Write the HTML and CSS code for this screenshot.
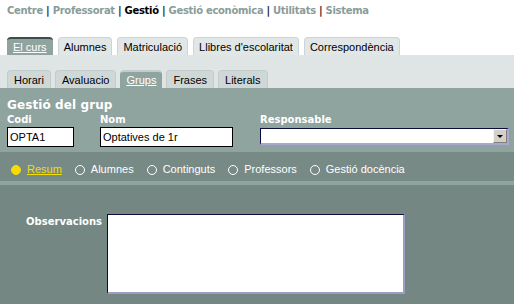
FILE: index.html
```html
<!DOCTYPE html>
<html lang="ca">
<head>
    <meta charset="UTF-8">
    <title>Gestió del grup</title>
    <link rel="stylesheet" href="styles.css">
</head>
<body>
    <div class="topnav">
        <a href="#">Centre</a> | <a href="#">Professorat</a> | <a href="#" class="current">Gestió</a> | <a href="#">Gestió econòmica</a> | <a href="#">Utilitats</a> | <a href="#">Sistema</a>
    </div>

    <!-- main tabs -->
    <div class="tabs main-tabs">
        <a href="#" class="tab active"><span>El curs</span></a>
        <a href="#" class="tab">Alumnes</a>
        <a href="#" class="tab">Matriculació</a>
        <a href="#" class="tab">Llibres d'escolaritat</a>
        <a href="#" class="tab">Correspondència</a>
    </div>

    <div class="subbar">
        <div class="tabs sub-tabs">
            <a href="#" class="tab">Horari</a>
            <a href="#" class="tab">Avaluacio</a>
            <a href="#" class="tab active"><span>Grups</span></a>
            <a href="#" class="tab">Frases</a>
            <a href="#" class="tab">Literals</a>
        </div>
    </div>

    <div class="panel">
        <h2>Gestió del grup</h2>
        <div class="fields">
            <div class="field">
                <label for="codi">Codi</label>
                <input type="text" id="codi" class="txt codi" value="OPTA1">
            </div>
            <div class="field">
                <label for="nom">Nom</label>
                <input type="text" id="nom" class="txt nom" value="Optatives de 1r">
            </div>
            <div class="field">
                <label>Responsable</label>
                <div class="combo">
                    <span class="combo-value"></span>
                    <span class="combo-btn"><span class="arrow"></span></span>
                </div>
            </div>
        </div>
    </div>

    <div class="options">
        <a href="#" class="opt selected"><span class="dot"></span><span class="opt-label">Resum</span></a>
        <a href="#" class="opt"><span class="dot"></span><span class="opt-label">Alumnes</span></a>
        <a href="#" class="opt"><span class="dot"></span><span class="opt-label">Continguts</span></a>
        <a href="#" class="opt"><span class="dot"></span><span class="opt-label">Professors</span></a>
        <a href="#" class="opt"><span class="dot"></span><span class="opt-label">Gestió docència</span></a>
    </div>

    <div class="detail">
        <div class="detail-row">
            <label for="obs">Observacions</label>
            <textarea id="obs" class="obs"></textarea>
        </div>
    </div>
</body>
</html>
```

FILE: styles.css
```css
body {
    margin: 0;
    background: #ffffff;
    font-family: "Liberation Sans", Arial, sans-serif;
    font-size: 11px;
    height: 304px;
    overflow: hidden;
}
a {
    text-decoration: none;
}
.topnav {
    height: 37px;
    box-sizing: border-box;
    padding: 5px 0 0 7px;
    font-family: "DejaVu Sans", Verdana, sans-serif;
    font-weight: bold;
    font-size: 10px;
    line-height: 12px;
    letter-spacing: -0.3px;
    color: #222;
}
.topnav a {
    color: #8a9b9b;
}
.topnav a.current {
    color: #000;
}
.tabs {
    display: flex;
    gap: 5px;
    padding-left: 7px;
}
.tab {
    display: block;
    height: 18px;
    box-sizing: border-box;
    padding: 3px 5px 0;
    line-height: 13px;
    color: #000;
    background: #e1e7e7;
    border: 1px solid #ccd5d5;
    border-bottom: none;
    border-radius: 4px 4px 0 0;
}
.tab.active {
    background: #8fa39f;
    color: #fff;
    border: none;
    border-top: 2px solid #3e4d4b;
    padding-top: 2px;
    padding-left: 6px;
    padding-right: 6px;
}
.tab.active span {
    text-decoration: underline;
}
.subbar {
    background: #dfe5e5;
    height: 33px;
    box-sizing: border-box;
    padding-top: 15px;
}
.sub-tabs {
    gap: 4px;
}
.sub-tabs .tab {
    background: #cfd8d7;
    border-color: #c2cccb;
    padding-left: 6px;
    padding-right: 6px;
}
.sub-tabs .tab.active {
    background: #8fa39f;
}
.panel {
    background: #8fa39f;
    height: 64px;
    box-sizing: border-box;
    padding: 10px 5px 0 7px;
    color: #fff;
}
.panel h2 {
    margin: 0;
    font-family: "DejaVu Sans", Verdana, sans-serif;
    font-size: 12px;
    line-height: 14px;
    letter-spacing: 0.1px;
}
.fields {
    display: grid;
    grid-template-columns: 93px 160px 1fr;
    margin-top: 2px;
}
.field label {
    display: block;
    font-family: "DejaVu Sans", Verdana, sans-serif;
    font-weight: bold;
    font-size: 10px;
    line-height: 12px;
    height: 12px;
}
.txt {
    display: block;
    box-sizing: border-box;
    height: 20px;
    margin: 1px 0 0;
    padding: 0 2px;
    border: 1px solid #000;
    background: #fff;
    font-family: "Liberation Sans", Arial, sans-serif;
    font-size: 11px;
    color: #000;
    outline: none;
}
.codi {
    width: 67px;
}
.nom {
    width: 133px;
}
.combo {
    display: flex;
    justify-content: flex-end;
    align-items: center;
    box-sizing: border-box;
    width: 249px;
    height: 17px;
    margin-top: 2px;
    background: #fff;
    border-top: 1px solid #0c0c3c;
    border-left: 1px solid #0c0c3c;
    border-right: 2px solid #a9a9cf;
    border-bottom: 2px solid #a9a9cf;
}
.combo-value {
    flex: 1;
}
.combo-btn {
    display: flex;
    align-items: center;
    justify-content: center;
    width: 14px;
    height: 14px;
    background: #d4d0c8;
    border: 1px solid #808080;
    border-top-color: #f4f4f4;
    border-left-color: #f4f4f4;
    box-sizing: border-box;
}
.arrow {
    width: 0;
    height: 0;
    border-left: 3px solid transparent;
    border-right: 3px solid transparent;
    border-top: 3px solid #000;
}
.options {
    display: flex;
    align-items: center;
    background: #778a86;
    height: 33px;
    box-sizing: border-box;
    padding: 6px 0 0 11px;
    border-bottom: 4px solid #8fa39f;
}
.opt {
    display: flex;
    align-items: center;
    color: #fff;
    line-height: 13px;
    margin-right: 13px;
}
.dot {
    width: 8px;
    height: 8px;
    border: 1px solid #fff;
    border-radius: 50%;
    margin-right: 6px;
}
.opt.selected {
    color: #f2de00;
}
.opt.selected .dot {
    background: #f7dc00;
    border-color: #f7dc00;
}
.opt.selected .opt-label {
    text-decoration: underline;
}
.detail {
    background: #748782;
    height: 119px;
    box-sizing: border-box;
    padding-top: 29px;
}
.detail-row {
    display: flex;
    align-items: flex-start;
}
.detail-row label {
    width: 102px;
    box-sizing: border-box;
    padding-top: 2px;
    text-align: right;
    margin-right: 5px;
    color: #fff;
    font-family: "DejaVu Sans", Verdana, sans-serif;
    font-weight: bold;
    font-size: 10px;
    line-height: 12px;
}
.obs {
    display: block;
    width: 298px;
    height: 80px;
    box-sizing: border-box;
    margin: 0;
    padding: 2px;
    background: #fff;
    border-top: 1px solid #0c0c3c;
    border-left: 1px solid #0c0c3c;
    border-right: 2px solid #9c9cc4;
    border-bottom: 2px solid #9c9cc4;
    resize: none;
    outline: none;
}
```
